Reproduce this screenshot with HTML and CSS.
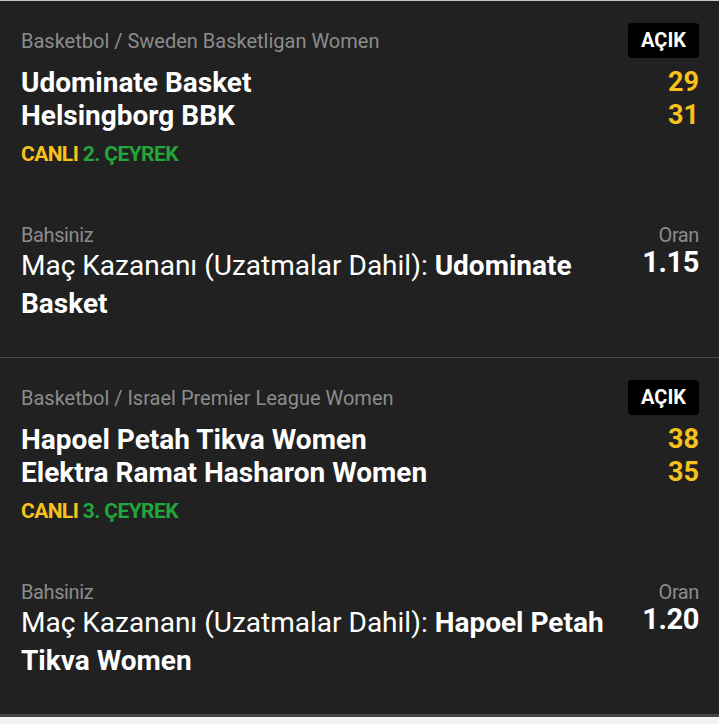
FILE: index.html
```html
<!DOCTYPE html>
<html lang="tr">
  <head>
    <meta charset="UTF-8" />
    <meta name="viewport" content="width=device-width, initial-scale=1.0" />
    <title>Bahislerim</title>
    <link rel="stylesheet" href="styles.css">
  </head>
  <body>
    <div id="bets">
      <div class="bet">
        <div class="head">
          <span class="league">Basketbol / Sweden Basketligan Women</span>
          <span class="badge">AÇIK</span>
        </div>
        <div class="team">
          <span>Udominate Basket</span>
          <span class="score">29</span>
        </div>
        <div class="team">
          <span>Helsingborg BBK</span>
          <span class="score">31</span>
        </div>
        <div class="status"><span class="live">CANLI</span> <span class="period">2. ÇEYREK</span></div>
        <div class="labels">
          <span>Bahsiniz</span>
          <span>Oran</span>
        </div>
        <div class="pick">
          <div class="market">Maç Kazananı (Uzatmalar Dahil): <b>Udominate Basket</b></div>
          <div class="odds">1.15</div>
        </div>
      </div>

      <div class="bet">
        <div class="head">
          <span class="league">Basketbol / Israel Premier League Women</span>
          <span class="badge">AÇIK</span>
        </div>
        <div class="team">
          <span>Hapoel Petah Tikva Women</span>
          <span class="score">38</span>
        </div>
        <div class="team">
          <span>Elektra Ramat Hasharon Women</span>
          <span class="score">35</span>
        </div>
        <div class="status"><span class="live">CANLI</span> <span class="period">3. ÇEYREK</span></div>
        <div class="labels">
          <span>Bahsiniz</span>
          <span>Oran</span>
        </div>
        <div class="pick">
          <div class="market">Maç Kazananı (Uzatmalar Dahil): <b>Hapoel Petah Tikva Women</b></div>
          <div class="odds">1.20</div>
        </div>
      </div>
    </div>
  </body>
</html>
```

FILE: styles.css
```css
* {
  margin: 0;
  padding: 0;
  box-sizing: border-box;
}
body {
  background-color: #f2f2f2;
  font-family: Roboto, "Liberation Sans", sans-serif;
  color: #fff;
}
#bets {
  border-top: 1px solid #c8c8c8;
  background-color: #212121;
}
.bet {
  height: 357px;
  padding: 22px 20px 0 21px;
  border-bottom: 1px solid #4a4a4a;
}
.bet:last-child {
  border-bottom: 3px solid #454545;
  height: 359px;
}
.head {
  display: flex;
  justify-content: space-between;
  align-items: center;
  height: 35px;
}
.league {
  font-size: 20px;
  color: #8c8c8c;
}
.badge {
  background-color: #000;
  border-radius: 4px;
  width: 71px;
  height: 35px;
  line-height: 35px;
  text-align: center;
  font-size: 20px;
  font-weight: bold;
}
.team {
  display: flex;
  justify-content: space-between;
  font-size: 28px;
  font-weight: bold;
  line-height: 33px;
}
.head + .team {
  margin-top: 8px;
}
.score {
  font-size: 27px;
  color: #f7c21b;
}
.status {
  margin-top: 10px;
  font-size: 21px;
  font-weight: bold;
  line-height: 24px;
  letter-spacing: -0.6px;
}
.live {
  color: #f7c21b;
}
.period {
  color: #22a63a;
}
.labels {
  display: flex;
  justify-content: space-between;
  margin-top: 57px;
  font-size: 20px;
  line-height: 24px;
  color: #8c8c8c;
  letter-spacing: -0.4px;
}
.pick {
  display: flex;
  justify-content: space-between;
  gap: 20px;
}
.market {
  font-size: 28px;
  line-height: 38px;
  max-width: 605px;
}
.odds {
  font-size: 29px;
  font-weight: bold;
  line-height: 30px;
  letter-spacing: -0.4px;
}
```
